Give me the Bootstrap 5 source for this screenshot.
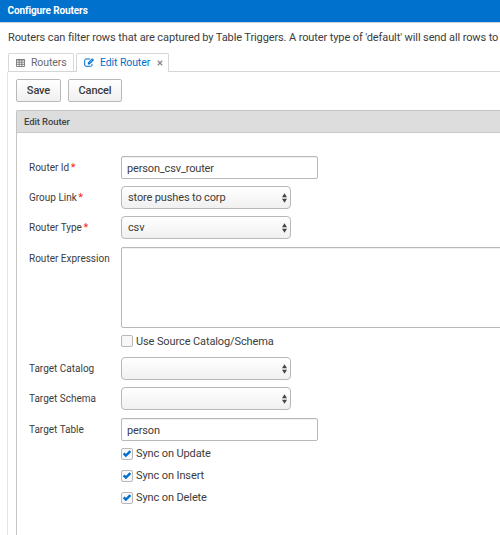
<!DOCTYPE html>
<html lang="en">
<head>
<meta charset="utf-8">
<meta name="viewport" content="width=device-width, initial-scale=1">
<title>Configure Routers</title>
<link href="https://cdn.jsdelivr.net/npm/bootstrap@5.3.0/dist/css/bootstrap.min.css" rel="stylesheet">
<style>
body{font-family:Roboto,"Liberation Sans",sans-serif;font-size:11px;line-height:14px;letter-spacing:-.11px;color:#3c3c3c;height:535px}
.title-bar{height:22px;background:#0072ce;font-size:10px;font-weight:700;padding-left:7.5px;box-shadow:0 1px 0 #c5d4e0}
.intro{height:31px;padding:9px 0 0 8px}
.tab-strip{height:19px;margin-left:8px;gap:3px;border-bottom:1px solid #d6d6d6}
.tab-strip .nav-link{height:18px;border:1px solid #d9d9d9;border-bottom:0;border-radius:2px 2px 0 0;padding:0 0 0 7px;color:#696969;background:#fff;font-size:10.5px}
.tab-strip .tab-a{width:66px}
.tab-strip .tab-b{width:93px;margin-left:-1px}
.tab-strip .nav-link.active{color:#0070ca;height:19px;border-color:#d6d6d6;padding-bottom:1px}
.glyph{flex:none;margin-right:6px}
.tab-b .glyph{margin-right:5px}
.t2{width:57px;letter-spacing:-.1px}
.sheet{margin-left:7px;height:464px;border-left:1px solid #e4e4e4;padding:7px 0 0 8px}
.btn-plain{height:23px;padding:0;border:1px solid #b9b9b9;border-radius:2px;background:linear-gradient(#fff,#f0f0f0);font-size:11px;font-weight:500;letter-spacing:-.13px;color:#3a3a3a;line-height:21px}
.w-save{width:45px}.w-cancel{width:54px;margin-left:7px}
.pane{height:426px;margin-top:8px;border:1px solid #c4c4c4;border-right:0;border-bottom:0;border-radius:2px 0 0 0}
.pane-head{height:22px;background:#ddd;border-bottom:1px solid #c8c8c8;font-size:9.5px;font-weight:500;letter-spacing:-.1px;color:#444;padding-left:7px}
.fields{padding:23px 0 0 12px}
.line{height:23px;margin-bottom:7px}
.cap{width:92px;flex:none;font-size:10px;letter-spacing:0;color:#3c3c3c}
.cap i{color:#f22;font-style:normal;font-size:11px;margin-left:1.5px}
.cap-top{padding-top:5px}
.form-control.box{width:197px;height:23px;padding:1px 5px 0;border:1px solid #b8b8b8;border-radius:2px;font-size:11px;letter-spacing:-.16px;line-height:14px;color:#3c3c3c;box-shadow:inset 0 1px 0 #f0f0f0}
.form-control.area{width:400px;height:81px;flex:none;resize:none}
.pick{width:170px;height:23px;border:1px solid #b8b8b8;border-radius:4px;background:linear-gradient(#fff,#f0f0f0);padding:0 3px 0 6px;letter-spacing:-.14px}
.tick{height:14px;margin:0 0 8px 92px}
.tick-lone{margin-top:7px}
.tick-lone .form-check-input{margin-bottom:2px!important}
.tick-next{margin-top:-1px}
.tick .form-check-input{width:12px;height:12px;margin:0 3px 0 0;border:1px solid #b8b8b8;border-radius:2px;background-color:#f7f7f7;background-size:12px 12px}
.tick .form-check-input:checked{border-color:#b8b8b8;background-image:url("data:image/svg+xml,%3Csvg xmlns='http://www.w3.org/2000/svg' viewBox='0 0 12 12'%3E%3Cpath d='M2.7 5.4 4.9 7.6 9.4 3.2' fill='none' stroke='%230070cc' stroke-width='2.5'/%3E%3C/svg%3E")}
</style>
</head>
<body class="overflow-hidden bg-white">
<header class="title-bar text-white d-flex align-items-center">Configure Routers</header>
<p class="intro text-nowrap mb-0">Routers can filter rows that are captured by Table Triggers. A router type of 'default' will send all rows to</p>
<nav class="tab-strip nav flex-nowrap">
  <a class="nav-link tab-a d-flex align-items-center" href="#"><svg width="9" height="8" viewBox="0 0 9 8" class="glyph"><path d="M.5.5h8v7h-8zM.5 1h8M.5 3.2h8M.5 5.3h8M3.2.5v7M5.8.5v7" fill="none" stroke="#686868" stroke-width=".8"/></svg><span>Routers</span></a>
  <a class="nav-link tab-b active d-flex align-items-center" href="#"><svg width="11" height="9" viewBox="0 0 11 9" class="glyph"><path d="M6.2 1H2Q.7 1 .7 2.2v4.9q0 1.2 1.3 1.2h4.8Q8 8.3 8 7.1V5.8" fill="none" stroke="#0070ca"/><path d="M3.8 4.6 8.2.2 10 2 5.6 6.4H3.8z" fill="#0070ca"/><path d="m5 4.9 3.2-3.2" stroke="#fff" stroke-width=".5"/></svg><span class="t2">Edit Router</span><svg width="6" height="6" viewBox="0 0 6 6"><path d="m.8.8 4.4 4.4m0-4.4L.8 5.2" stroke="#888" stroke-width="1.3"/></svg></a>
</nav>
<main class="sheet">
  <div class="d-flex">
    <button class="btn btn-plain w-save">Save</button>
    <button class="btn btn-plain w-cancel">Cancel</button>
  </div>
  <section class="pane">
    <div class="pane-head d-flex align-items-center">Edit Router</div>
    <form class="fields">
      <div class="line d-flex align-items-center"><label class="cap">Router Id<i>*</i></label><input class="form-control box" value="person_csv_router"></div>
      <div class="line d-flex align-items-center"><label class="cap">Group Link<i>*</i></label><div class="pick d-flex align-items-center justify-content-between"><span>store pushes to corp</span><svg width="5" height="10" viewBox="0 0 5 10"><path d="M0 4.2 2.5.3 5 4.2zM0 5.8h5L2.5 9.7z" fill="#444"/></svg></div></div>
      <div class="line d-flex align-items-center mb-2"><label class="cap">Router Type<i>*</i></label><div class="pick d-flex align-items-center justify-content-between"><span>csv</span><svg width="5" height="10" viewBox="0 0 5 10"><path d="M0 4.2 2.5.3 5 4.2zM0 5.8h5L2.5 9.7z" fill="#444"/></svg></div></div>
      <div class="d-flex"><label class="cap cap-top">Router Expression</label><textarea class="form-control box area"></textarea></div>
      <div class="tick tick-lone d-flex align-items-center"><input class="form-check-input" type="checkbox" id="src"><label for="src">Use Source Catalog/Schema</label></div>
      <div class="line d-flex align-items-center"><label class="cap">Target Catalog</label><div class="pick d-flex align-items-center justify-content-end"><svg width="5" height="10" viewBox="0 0 5 10"><path d="M0 4.2 2.5.3 5 4.2zM0 5.8h5L2.5 9.7z" fill="#444"/></svg></div></div>
      <div class="line d-flex align-items-center mb-2"><label class="cap">Target Schema</label><div class="pick d-flex align-items-center justify-content-end"><svg width="5" height="10" viewBox="0 0 5 10"><path d="M0 4.2 2.5.3 5 4.2zM0 5.8h5L2.5 9.7z" fill="#444"/></svg></div></div>
      <div class="line d-flex align-items-center"><label class="cap">Target Table</label><input class="form-control box" value="person"></div>
      <div class="tick tick-next d-flex align-items-center"><input class="form-check-input" type="checkbox" id="upd" checked><label for="upd">Sync on Update</label></div>
      <div class="tick d-flex align-items-center"><input class="form-check-input" type="checkbox" id="ins" checked><label for="ins">Sync on Insert</label></div>
      <div class="tick d-flex align-items-center"><input class="form-check-input" type="checkbox" id="del" checked><label for="del">Sync on Delete</label></div>
    </form>
  </section>
</main>
<script src="https://cdn.jsdelivr.net/npm/bootstrap@5.3.0/dist/js/bootstrap.bundle.min.js"></script>
</body>
</html>
